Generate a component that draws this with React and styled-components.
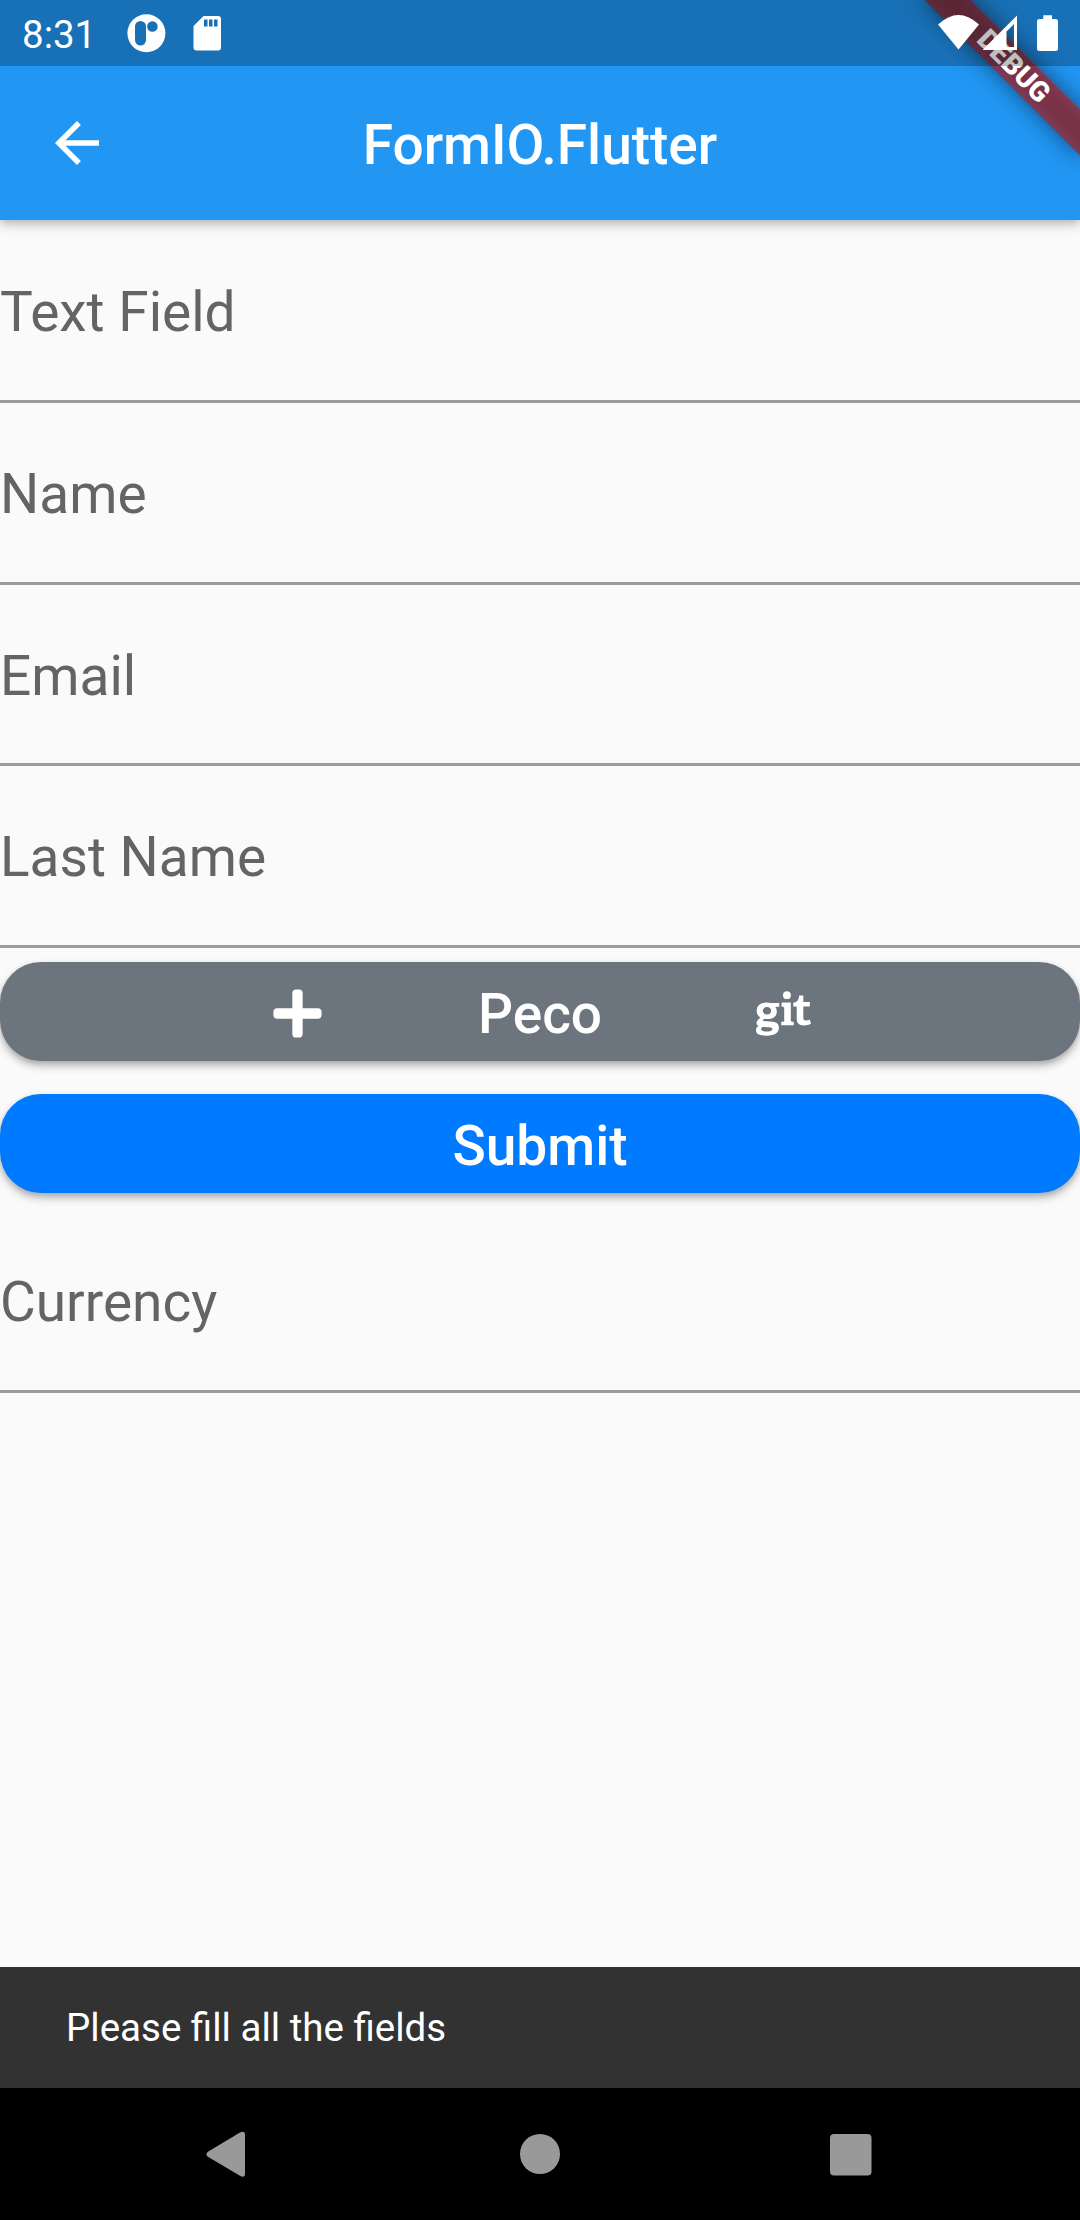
import React from 'react';
import styled, { createGlobalStyle } from 'styled-components';
import { FaPlus, FaGit } from 'react-icons/fa';

const GlobalStyle = createGlobalStyle`
  *, *::before, *::after { box-sizing: border-box; }
  body { margin: 0; background: #fafafa; }
`;

const Screen = styled.div`
  display: flex;
  flex-direction: column;
  width: 1080px;
  height: 2220px;
  overflow: hidden;
  background: #fafafa;
  font-family: Roboto, sans-serif;
`;

const Header = styled.header`
  position: relative;
  flex: none;
  height: 220px;
  padding-top: 66px;
  background: #2196f3;
  box-shadow: 0 5px 11px rgba(0, 0, 0, 0.2), 0 1px 8px rgba(0, 0, 0, 0.12);
`;

const StatusBar = styled.div`
  position: absolute;
  inset: 0 0 auto 0;
  display: flex;
  align-items: center;
  justify-content: space-between;
  height: 66px;
  padding: 0 20px 0 22px;
  background: rgba(0, 0, 0, 0.25);
  color: #fff;
`;

const StatusGroup = styled.div`
  display: flex;
  align-items: center;
  svg { display: block; }
`;

const Clock = styled.span`
  width: 104px;
  padding-top: 3px;
  font-size: 38.5px;
  line-height: 46px;
`;

const BannerCorner = styled.div`
  position: absolute;
  top: 0;
  right: 0;
  width: 260px;
  height: 220px;
  overflow: hidden;
`;

const DebugBanner = styled.div`
  position: absolute;
  top: 77px;
  left: 150px;
  width: 220px;
  height: 33px;
  transform: rotate(45deg);
  transform-origin: 110px -77px;
  background:
    linear-gradient(rgba(183, 28, 28, 0.627), rgba(183, 28, 28, 0.627)),
    linear-gradient(
      rgba(0, 0, 0, 0.25),
      rgba(0, 0, 0, 0.38) 25%,
      rgba(0, 0, 0, 0.43) 50%,
      rgba(0, 0, 0, 0.38) 75%,
      rgba(0, 0, 0, 0.25)
    );
  box-shadow: 0 0 22px rgba(0, 0, 0, 0.5);
  color: #fff;
  font-size: 28.05px;
  font-weight: 900;
  line-height: 33px;
  text-align: center;
`;

const AppBar = styled.div`
  display: grid;
  grid-template-columns: 154px 1fr 154px;
  align-items: center;
  height: 154px;
`;

const BackButton = styled.button`
  display: flex;
  align-items: center;
  justify-content: center;
  height: 154px;
  padding: 0;
  border: 0;
  background: none;
`;

const Title = styled.h1`
  margin: 0;
  padding-top: 3px;
  color: #fff;
  font-size: 55px;
  font-weight: 500;
  line-height: 64px;
  text-align: center;
`;

const Form = styled.main`
  flex: 1;
  display: flex;
  flex-direction: column;
  padding-top: 1.4px;
`;

const Field = styled.label`
  display: flex;
  flex: none;
  height: 181.6px;
  padding-top: 59px;
  border-bottom: 3px solid #9b9b9b;
  color: #646464;
  font-size: 55px;
  line-height: 64px;
`;

const Button = styled.button`
  display: flex;
  flex: none;
  align-items: center;
  justify-content: center;
  height: 99px;
  margin: ${(p) => p.$margin};
  padding: 5px 0 0;
  border: 0;
  border-radius: 41px;
  background: ${(p) => p.$color};
  box-shadow: 0 5px 8px rgba(0, 0, 0, 0.25), 0 2px 5px rgba(0, 0, 0, 0.12);
  color: #fff;
  font-family: inherit;
  font-size: 55px;
  font-weight: 500;
  line-height: 64px;
  svg { display: block; margin-top: -2px; }
`;

const ButtonLabel = styled.span`
  width: 431px;
  text-align: center;
`;

const SnackBar = styled.div`
  flex: none;
  display: flex;
  align-items: center;
  height: 121px;
  padding: 0 66px;
  background: #323232;
  color: #fff;
  font-size: 38.5px;
  line-height: 46px;
`;

const NavBar = styled.nav`
  flex: none;
  display: flex;
  align-items: center;
  justify-content: space-between;
  height: 132px;
  padding: 0 208px 0 206px;
  background: #000;
  svg { display: block; }
`;

const fields = ['Text Field', 'Name', 'Email', 'Last Name'];

export default function App() {
  return (
    <Screen>
      <GlobalStyle />
      <Header>
        <AppBar>
          <BackButton aria-label="Back">
            <svg width="66" height="66" viewBox="0 0 24 24" fill="#fff">
              <path d="M20 11H7.83l5.59-5.59L12 4l-8 8 8 8 1.41-1.41L7.83 13H20v-2z" />
            </svg>
          </BackButton>
          <Title>FormIO.Flutter</Title>
        </AppBar>
        <BannerCorner>
          <DebugBanner>DEBUG</DebugBanner>
        </BannerCorner>
        <StatusBar>
          <StatusGroup>
            <Clock>8:31</Clock>
            <svg width="110" height="66" viewBox="126 0 110 66" fill="#fff">
              <path
                fillRule="evenodd"
                d="M146.4 14.3a19 19 0 1 0 0 38a19 19 0 1 0 0-38zM140.5 21a5.5 5.5 0 0 0-5.5 5.5v13.5a5.5 5.5 0 0 0 11 0v-13.5a5.5 5.5 0 0 0-5.5-5.5zM152.4 21.2a5.3 5.3 0 1 0 0 10.6a5.3 5.3 0 1 0 0-10.6z"
              />
              <path
                fillRule="evenodd"
                d="M203.5 16h14.5a3 3 0 0 1 3 3v28.500a3 3 0 0 1-3 3h-21.500a3 3 0 0 1-3-3v-21.500zM204 19.500v7h3.500v-7zM209 19.500v7h3.500v-7zM214 19.500v7h3.500v-7z"
              />
            </svg>
          </StatusGroup>
          <StatusGroup>
            <svg width="124" height="66" viewBox="936 0 124 66" fill="#fff">
              <path d="M938 24.500q20.500-19 41 0l-20.500 25z" />
              <path fillRule="evenodd" d="M1017 15.500v34.500h-34.500zM1014 24l-7.500 7.500v15.500h7.500z" />
              <path d="M1043.300 15.300h8.700v3.700h3.500a2.500 2.500 0 0 1 2.500 2.500v27a2.500 2.500 0 0 1-2.500 2.500h-16a2.500 2.500 0 0 1-2.500-2.500v-27a2.500 2.500 0 0 1 2.500-2.500h3.800z" />
            </svg>
          </StatusGroup>
        </StatusBar>
      </Header>
      <Form>
        {fields.map((name) => (
          <Field key={name}>{name}</Field>
        ))}
        <Button $color="#6c757d" $margin="14.6px 0 0">
          <FaPlus size={55} />
          <ButtonLabel>Peco</ButtonLabel>
          <FaGit size={55} />
        </Button>
        <Button $color="#007bff" $margin="33px 0 18px">Submit</Button>
        <Field>Currency</Field>
      </Form>
      <SnackBar>Please fill all the fields</SnackBar>
      <NavBar>
        <svg width="44" height="46" viewBox="206 2131 44 46" fill="#999">
          <path d="M207.500 2152L239.500 2132.800Q245 2130 245 2135V2174Q245 2178.500 239.500 2175.500L207.500 2156.500Q205.500 2154.300 207.500 2152z" />
        </svg>
        <svg width="40" height="40" viewBox="0 0 40 40" fill="#999">
          <circle cx="20" cy="20" r="20" />
        </svg>
        <svg width="42" height="44" viewBox="0 -2 42 44" fill="#999">
          <rect width="41.500" height="41.500" rx="4" />
        </svg>
      </NavBar>
    </Screen>
  );
}
